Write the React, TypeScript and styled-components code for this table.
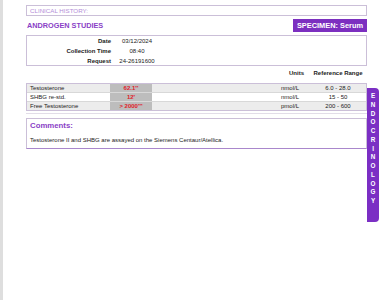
import { Fragment } from "react";
import styled, { createGlobalStyle } from "styled-components";

const GlobalStyle = createGlobalStyle`
  html, body {
    margin: 0;
    padding: 0;
    background: #ffffff;
  }
  body {
    font-family: "Liberation Sans", Arial, sans-serif;
    color: #222;
  }
`;

const purple = "#8a3fc6";
const boxBorder = "#cbbfd8";

const Page = styled.div`
  display: flex;
  align-items: flex-start;
  min-height: 300px;
  border-left: 3px solid #dedede;
  padding: 5px 0 0 23px;
  box-sizing: border-box;
`;

const Report = styled.div`
  width: 341px;
  display: flex;
  flex-direction: column;
`;

const HistoryBox = styled.div`
  height: 11px;
  box-sizing: border-box;
  border: 1px solid ${boxBorder};
  padding-left: 3px;
  font-size: 6.2px;
  line-height: 9px;
  color: #b48ed8;
  text-transform: uppercase;
`;

const TitleRow = styled.div`
  display: flex;
  justify-content: space-between;
  align-items: center;
  margin-top: 3px;
  height: 13px;
`;

const Title = styled.div`
  font-size: 7.3px;
  font-weight: 700;
  color: ${purple};
  padding-left: 1px;
`;

const Specimen = styled.div`
  background: #7c2fc0;
  color: #fff;
  font-size: 7.4px;
  font-weight: 700;
  height: 13px;
  line-height: 13px;
  padding: 0 2px;
  width: 74px;
  box-sizing: border-box;
  text-align: center;
  white-space: nowrap;
`;

const InfoBox = styled.div`
  margin-top: 3px;
  height: 31px;
  box-sizing: border-box;
  border: 1px solid ${boxBorder};
  padding-top: 0;
  display: grid;
  grid-template-columns: 86px 44px;
  grid-auto-rows: 10px;
  font-size: 6px;
  align-items: center;
`;

const InfoLabel = styled.div`
  font-weight: 700;
  text-align: right;
  padding-right: 2px;
  white-space: nowrap;
`;

const InfoValue = styled.div`
  text-align: center;
  padding-left: 4px;
  white-space: nowrap;
`;

const ResultGrid = styled.div`
  display: grid;
  grid-template-columns: 83px 42px 1fr 29px 56px;
  font-size: 6px;
  white-space: nowrap;
`;

const HeaderRow = styled(ResultGrid)`
  margin-top: 2px;
  height: 10px;
  align-items: center;
  font-weight: 700;
  padding: 0 1px;
`;

const HeaderUnits = styled.div`
  padding-left: 8px;
`;

const Table = styled.div`
  margin-top: 5px;
  border: 1px solid ${boxBorder};
  display: flex;
  flex-direction: column;
`;

const Row = styled(ResultGrid)<{ $shade: boolean }>`
  height: 8px;
  align-items: stretch;
  background: ${(p) => (p.$shade ? "#ececec" : "#ffffff")};
  border-bottom: 1px solid #d8d8d8;
  &:last-child {
    border-bottom: none;
  }
`;

const Cell = styled.div<{ $align?: string }>`
  display: flex;
  align-items: center;
  justify-content: ${(p) => p.$align || "flex-start"};
`;

const Name = styled(Cell)`
  padding-left: 3px;
`;

const Value = styled(Cell)`
  background: #bdbdbd;
  color: #e0202a;
  font-weight: 700;
  sup {
    font-size: 4px;
    vertical-align: top;
    line-height: 4px;
  }
`;

const TableFoot = styled.div`
  margin-top: 2px;
  border-top: 1px solid #e2dde8;
`;

const CommentsBox = styled.div`
  margin-top: 4px;
  height: 31px;
  box-sizing: border-box;
  border: 1px solid ${boxBorder};
  border-bottom-color: #a987cc;
  padding: 2px 3px 0;
  display: flex;
  flex-direction: column;
`;

const CommentsTitle = styled.div`
  font-size: 7.8px;
  font-weight: 700;
  color: ${purple};
`;

const CommentsText = styled.div`
  margin-top: 7px;
  font-size: 6px;
`;

const SideTab = styled.div`
  margin-top: 83px;
  width: 12px;
  height: 134px;
  background: #7b2fc4;
  border-radius: 0 4px 4px 0;
  display: flex;
  flex-direction: column;
  align-items: center;
  padding-top: 4px;
  box-sizing: border-box;
`;

const TabLetter = styled.span`
  color: #fff;
  font-size: 6.3px;
  font-weight: 700;
  height: 8.75px;
  line-height: 8.75px;
`;

const info = [
  ["Date", "03/12/2024"],
  ["Collection Time", "08:40"],
  ["Request", "24-26191600"],
];

const results = [
  { name: "Testosterone", value: "62.1", flag: "**", units: "nmol/L", range: "6.0 - 28.0" },
  { name: "SHBG re-std.", value: "12", flag: "*", units: "nmol/L", range: "15 - 50" },
  { name: "Free Testosterone", value: "> 2000", flag: "***", units: "pmol/L", range: "200 - 600" },
];

export default function App() {
  return (
    <>
      <GlobalStyle />
      <Page>
        <Report>
          <HistoryBox>Clinical History:</HistoryBox>
          <TitleRow>
            <Title>ANDROGEN STUDIES</Title>
            <Specimen>SPECIMEN: Serum</Specimen>
          </TitleRow>
          <InfoBox>
            {info.map(([label, value]) => (
              <Fragment key={label}>
                <InfoLabel>{label}</InfoLabel>
                <InfoValue>{value}</InfoValue>
              </Fragment>
            ))}
          </InfoBox>
          <HeaderRow>
            <span />
            <span />
            <span />
            <HeaderUnits>Units</HeaderUnits>
            <Cell $align="center">Reference Range</Cell>
          </HeaderRow>
          <Table>
            {results.map((r, i) => (
              <Row key={r.name} $shade={i !== 1}>
                <Name>{r.name}</Name>
                <Value $align="center">
                  {r.value}
                  <sup>{r.flag}</sup>
                </Value>
                <span />
                <Cell>{r.units}</Cell>
                <Cell $align="center">{r.range}</Cell>
              </Row>
            ))}
          </Table>
          <TableFoot />
          <CommentsBox>
            <CommentsTitle>Comments:</CommentsTitle>
            <CommentsText>
              Testosterone II and SHBG are assayed on the Siemens Centaur/Atellica.
            </CommentsText>
          </CommentsBox>
        </Report>
        <SideTab>
          {"ENDOCRINOLOGY".split("").map((c, i) => (
            <TabLetter key={i}>{c}</TabLetter>
          ))}
        </SideTab>
      </Page>
    </>
  );
}
